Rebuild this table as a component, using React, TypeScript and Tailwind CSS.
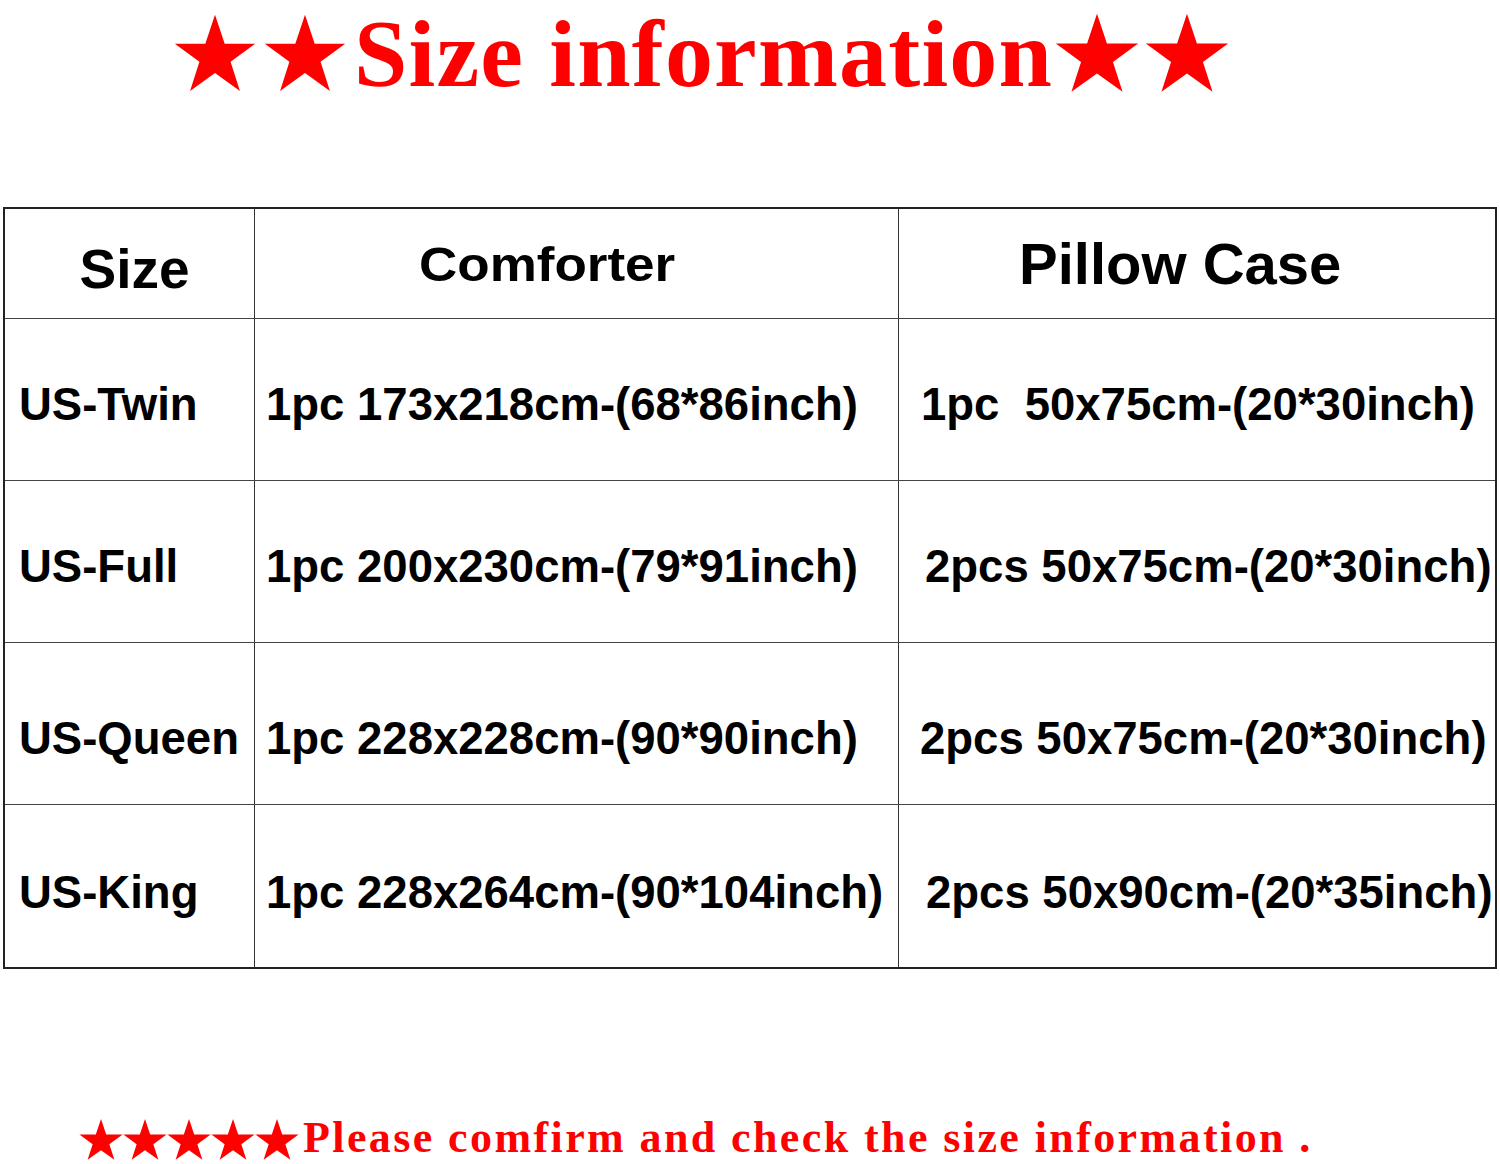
const Star = ({ size }: { size: number }) => (
  <svg width={size} height={size} viewBox="0 0 100 100" className="shrink-0">
    <polygon
      points="50,2 61.8,37.6 99,37.6 69,59.6 80.4,95 50,73.2 19.6,95 31,59.6 1,37.6 38.2,37.6"
      fill="#ff0000"
    />
  </svg>
);

const rows = [
  { size: 'US-Twin', comforter: '1pc 173x218cm-(68*86inch)', pillow: '1pc  50x75cm-(20*30inch)', pl: 'pl-[22px]', pt: 'pt-[12px]' },
  { size: 'US-Full', comforter: '1pc 200x230cm-(79*91inch)', pillow: '2pcs 50x75cm-(20*30inch)', pl: 'pl-[26px]', pt: 'pt-[12px]' },
  { size: 'US-Queen', comforter: '1pc 228x228cm-(90*90inch)', pillow: '2pcs 50x75cm-(20*30inch)', pl: 'pl-[21px]', pt: 'pt-[32px]' },
  { size: 'US-King', comforter: '1pc 228x264cm-(90*104inch)', pillow: '2pcs 50x90cm-(20*35inch)', pl: 'pl-[27px]', pt: 'pt-[14px]' },
];

const sans = "font-['Liberation_Sans',Arial,sans-serif] font-bold text-black";

export default function App() {
  return (
    <div className="w-[1500px] h-[1164px] bg-white overflow-hidden flex flex-col">
      {/* title */}
      <div className="h-[207px] pl-[174px]">
        <div className="flex items-center text-[#ff0000] font-['Liberation_Serif','Times_New_Roman',serif] font-bold text-[96px] leading-[108px] tracking-[1.2px]">
          <Star size={82} />
          <span className="ml-[8px]"><Star size={82} /></span>
          <span className="ml-[8px]">Size information</span>
          <span className="ml-[2px]"><Star size={84} /></span>
          <span className="ml-[6px]"><Star size={84} /></span>
        </div>
      </div>

      {/* table */}
      <div className={`ml-[3px] w-[1494px] border-2 border-[#222] ${sans}`}>
        <div className="flex h-[110px] border-b border-[#444]">
          <div className="w-[249px] shrink-0 flex items-center justify-center pt-[12px] text-[55px] pl-[10px]">Size</div>
          <div className="w-[644px] shrink-0 border-l border-[#333] flex items-center pl-[164px] text-[53px]">
            <span className="inline-block scale-y-[0.92]">Comforter</span>
          </div>
          <div className="flex-1 min-w-0 border-l border-[#333] flex items-center pl-[120px] text-[58px]">Pillow Case</div>
        </div>
        {rows.map((r, i) => (
          <div
            key={r.size}
            className={`flex h-[162px] text-[45.5px] ${i < rows.length - 1 ? 'border-b border-[#444]' : ''}`}
          >
            <div className={`w-[249px] shrink-0 flex items-center pl-[14px] ${r.pt}`}>{r.size}</div>
            <div className={`w-[644px] shrink-0 border-l border-[#333] flex items-center pl-[11px] ${r.pt}`}>{r.comforter}</div>
            <div className={`flex-1 min-w-0 overflow-hidden border-l border-[#333] flex items-center whitespace-pre ${r.pl} ${r.pt}`}>{r.pillow}</div>
          </div>
        ))}
      </div>

      {/* note */}
      <div className="mt-auto pb-[2px] pl-[79px] flex items-end text-[#ff0000] font-['Liberation_Serif','Times_New_Roman',serif] font-bold text-[44px] leading-[48px] tracking-[2.4px]">
        <Star size={44} />
        <Star size={44} />
        <Star size={44} />
        <Star size={44} />
        <Star size={44} />
        <span className="ml-[4px]">Please comfirm and check the size information .</span>
      </div>
    </div>
  );
}
